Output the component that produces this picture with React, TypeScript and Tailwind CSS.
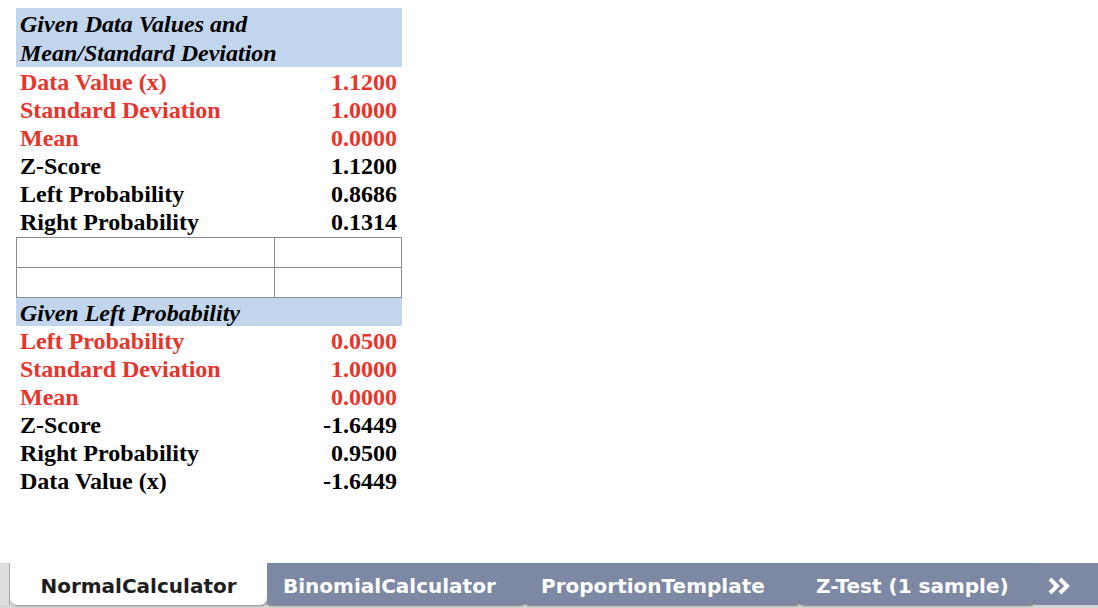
import React from "react";

const RED = "text-[#e8342a]";

interface Row {
  label: string;
  value: string;
  input?: boolean;
}

const firstRows: Row[] = [
  { label: "Data Value (x)", value: "1.1200", input: true },
  { label: "Standard Deviation", value: "1.0000", input: true },
  { label: "Mean", value: "0.0000", input: true },
  { label: "Z-Score", value: "1.1200" },
  { label: "Left Probability", value: "0.8686" },
  { label: "Right Probability", value: "0.1314" },
];

const secondRows: Row[] = [
  { label: "Left Probability", value: "0.0500", input: true },
  { label: "Standard Deviation", value: "1.0000", input: true },
  { label: "Mean", value: "0.0000", input: true },
  { label: "Z-Score", value: "-1.6449" },
  { label: "Right Probability", value: "0.9500" },
  { label: "Data Value (x)", value: "-1.6449" },
];

function DataRow({ row }: { row: Row }) {
  return (
    <div
      className={`flex h-[28px] items-center justify-between pl-[4px] pr-[5px] pt-[1px] font-bold ${
        row.input ? RED : "text-black"
      }`}
    >
      <span>{row.label}</span>
      <span>{row.value}</span>
    </div>
  );
}

const tabs = ["BinomialCalculator", "ProportionTemplate", "Z-Test (1 sample)"];
const tabWidths = ["w-[258px]", "w-[275px]", "w-[235px]"];

export default function App() {
  return (
    <div className="flex h-[608px] w-[1098px] flex-col overflow-hidden bg-white">
      <div
        className="flex-1 pl-4 pt-2 text-[24px] leading-[28px]"
        style={{ fontFamily: '"Liberation Serif", "Times New Roman", serif' }}
      >
        <div className="w-[386px]">
          <div className="h-[59px] bg-[#c1d5ed] px-[4px] pt-[2px] font-bold italic leading-[29px] text-black">
            Given Data Values and
            <br />
            Mean/Standard Deviation
          </div>
          {firstRows.map((r) => (
            <DataRow key={"a" + r.label} row={r} />
          ))}
          <div className="mt-[2px] grid grid-cols-[258px_1fr] border border-[#8c8c96]">
            <div className="h-[30px] border-b border-r border-[#8c8c96]" />
            <div className="h-[30px] border-b border-[#8c8c96]" />
            <div className="h-[29px] border-r border-[#8c8c96]" />
            <div className="h-[29px]" />
          </div>
          <div className="h-[28px] bg-[#c1d5ed] px-[4px] pt-[1px] font-bold italic text-black">
            Given Left Probability
          </div>
          {secondRows.map((r) => (
            <DataRow key={"b" + r.label} row={r} />
          ))}
        </div>
      </div>

      <div
        className="flex h-[45px] items-start bg-[#d6d6d6] text-[20px] font-bold"
        style={{ fontFamily: '"DejaVu Sans", "Liberation Sans", sans-serif' }}
      >
        <div className="h-[42px] w-[10px] border-r border-[#a8a8a8] bg-[#dedede]" />
        <div className="flex h-[42px] w-[257px] items-center justify-center rounded-b-[7px] bg-white pt-[3px] text-[#1e1e1e] shadow-[1px_1px_2px_rgba(0,0,0,0.35)]">
          NormalCalculator
        </div>
        {tabs.map((t, i) => (
          <div
            key={t}
            className={`flex h-[42px] ${tabWidths[i]} items-center rounded-br-[7px] bg-[#7d88a4] pl-[16px] pt-[3px] text-white shadow-[2px_1px_2px_rgba(0,0,0,0.45)]`}
          >
            {t}
          </div>
        ))}
        <div className="flex h-[42px] flex-1 items-center bg-[#7d88a4] pl-[13px] pt-[3px] text-white">
          <svg width="24" height="18" viewBox="0 0 24 18" fill="none" stroke="white" strokeWidth="4" strokeLinecap="butt" strokeLinejoin="miter">
            <path d="M2 2 L9 9 L2 16" />
            <path d="M12 2 L19 9 L12 16" />
          </svg>
        </div>
      </div>
    </div>
  );
}
